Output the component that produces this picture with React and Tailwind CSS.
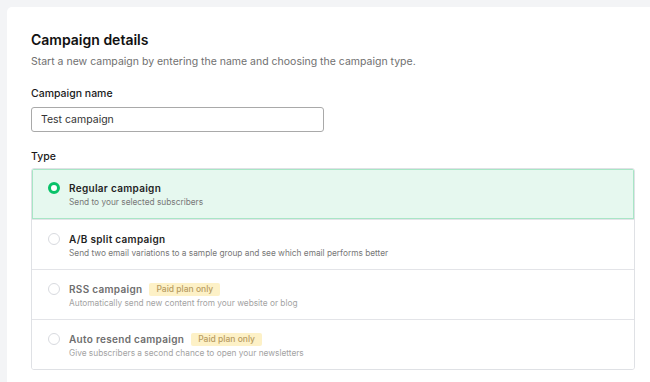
import React, { useState } from 'react'

const types = [
  { id: 'regular', title: 'Regular campaign', desc: 'Send to your selected subscribers' },
  { id: 'ab', title: 'A/B split campaign', desc: 'Send two email variations to a sample group and see which email performs better' },
  { id: 'rss', title: 'RSS campaign', desc: 'Automatically send new content from your website or blog', paid: true },
  { id: 'resend', title: 'Auto resend campaign', desc: 'Give subscribers a second chance to open your newsletters', paid: true },
]

const App = () => {
  const [name, setName] = useState('Test campaign')
  const [type, setType] = useState('regular')

  return (
    <div className="min-h-screen bg-[#f3f4f6] pt-[7px] pl-[7px] font-['Inter',sans-serif]">
      <div className="bg-white rounded-tl-[5px] min-h-[375px] pl-6 pr-4 pt-[23px] pb-6">
        {/* header */}
        <p className="text-[14px] leading-[20px] font-semibold text-[#111]">Campaign details</p>
        <p className="mt-[5px] text-[10.5px] leading-[14px] text-[#707070]">Start a new campaign by entering the name and choosing the campaign type.</p>

        {/* name */}
        <p className="mt-[18px] text-[10.5px] leading-[14px] font-medium text-[#1a1a1a]">Campaign name</p>
        <input
          value={name}
          onChange={(e) => setName(e.target.value)}
          className="mt-[6px] block w-[293px] h-[25px] px-[9px] border border-[#a9a9a9] rounded-[3px] text-[10.5px] text-[#333] outline-none"
        />

        {/* type */}
        <p className="mt-[18px] text-[10.5px] leading-[14px] font-medium text-[#1a1a1a]">Type</p>
        <div className="mt-[4px] w-[604px] border border-[#dfe1e5] rounded-[3px] overflow-hidden">
          {types.map((item, index) => {
            const active = type === item.id
            return (
              <div
                key={item.id}
                onClick={() => !item.paid && setType(item.id)}
                className={`h-[50px] flex items-start gap-[9px] pl-[16px] pt-[13px] cursor-pointer ${index > 0 ? 'border-t border-[#e3e4e8]' : ''} ${active ? 'bg-[#e6f8ef] outline outline-[#a8e6c6] -outline-offset-1' : 'bg-white'}`}>
                <span className={`w-[12px] h-[12px] rounded-full shrink-0 ${active ? 'border-[3.5px] border-[#09c269] bg-white' : 'border border-[#d8dadf] bg-white'}`}></span>
                <div>
                  <div className="flex items-center gap-[7px]">
                    <p className={`text-[10px] leading-[13px] font-semibold tracking-[0.3px] ${item.paid ? 'text-[#6e6e6e]' : 'text-[#1f1f1f]'}`}>{item.title}</p>
                    {item.paid && <span className="bg-[#fdf1c7] text-[#b89c62] text-[8.5px] leading-[13px] font-medium px-[7px] rounded-[2px]">Paid plan only</span>}
                  </div>
                  <p className={`mt-[1px] text-[8.3px] leading-[12px] ${item.paid ? 'text-[#a3a3a3]' : 'text-[#777]'}`}>{item.desc}</p>
                </div>
              </div>
            )
          })}
        </div>
      </div>
    </div>
  )
}

export default App
